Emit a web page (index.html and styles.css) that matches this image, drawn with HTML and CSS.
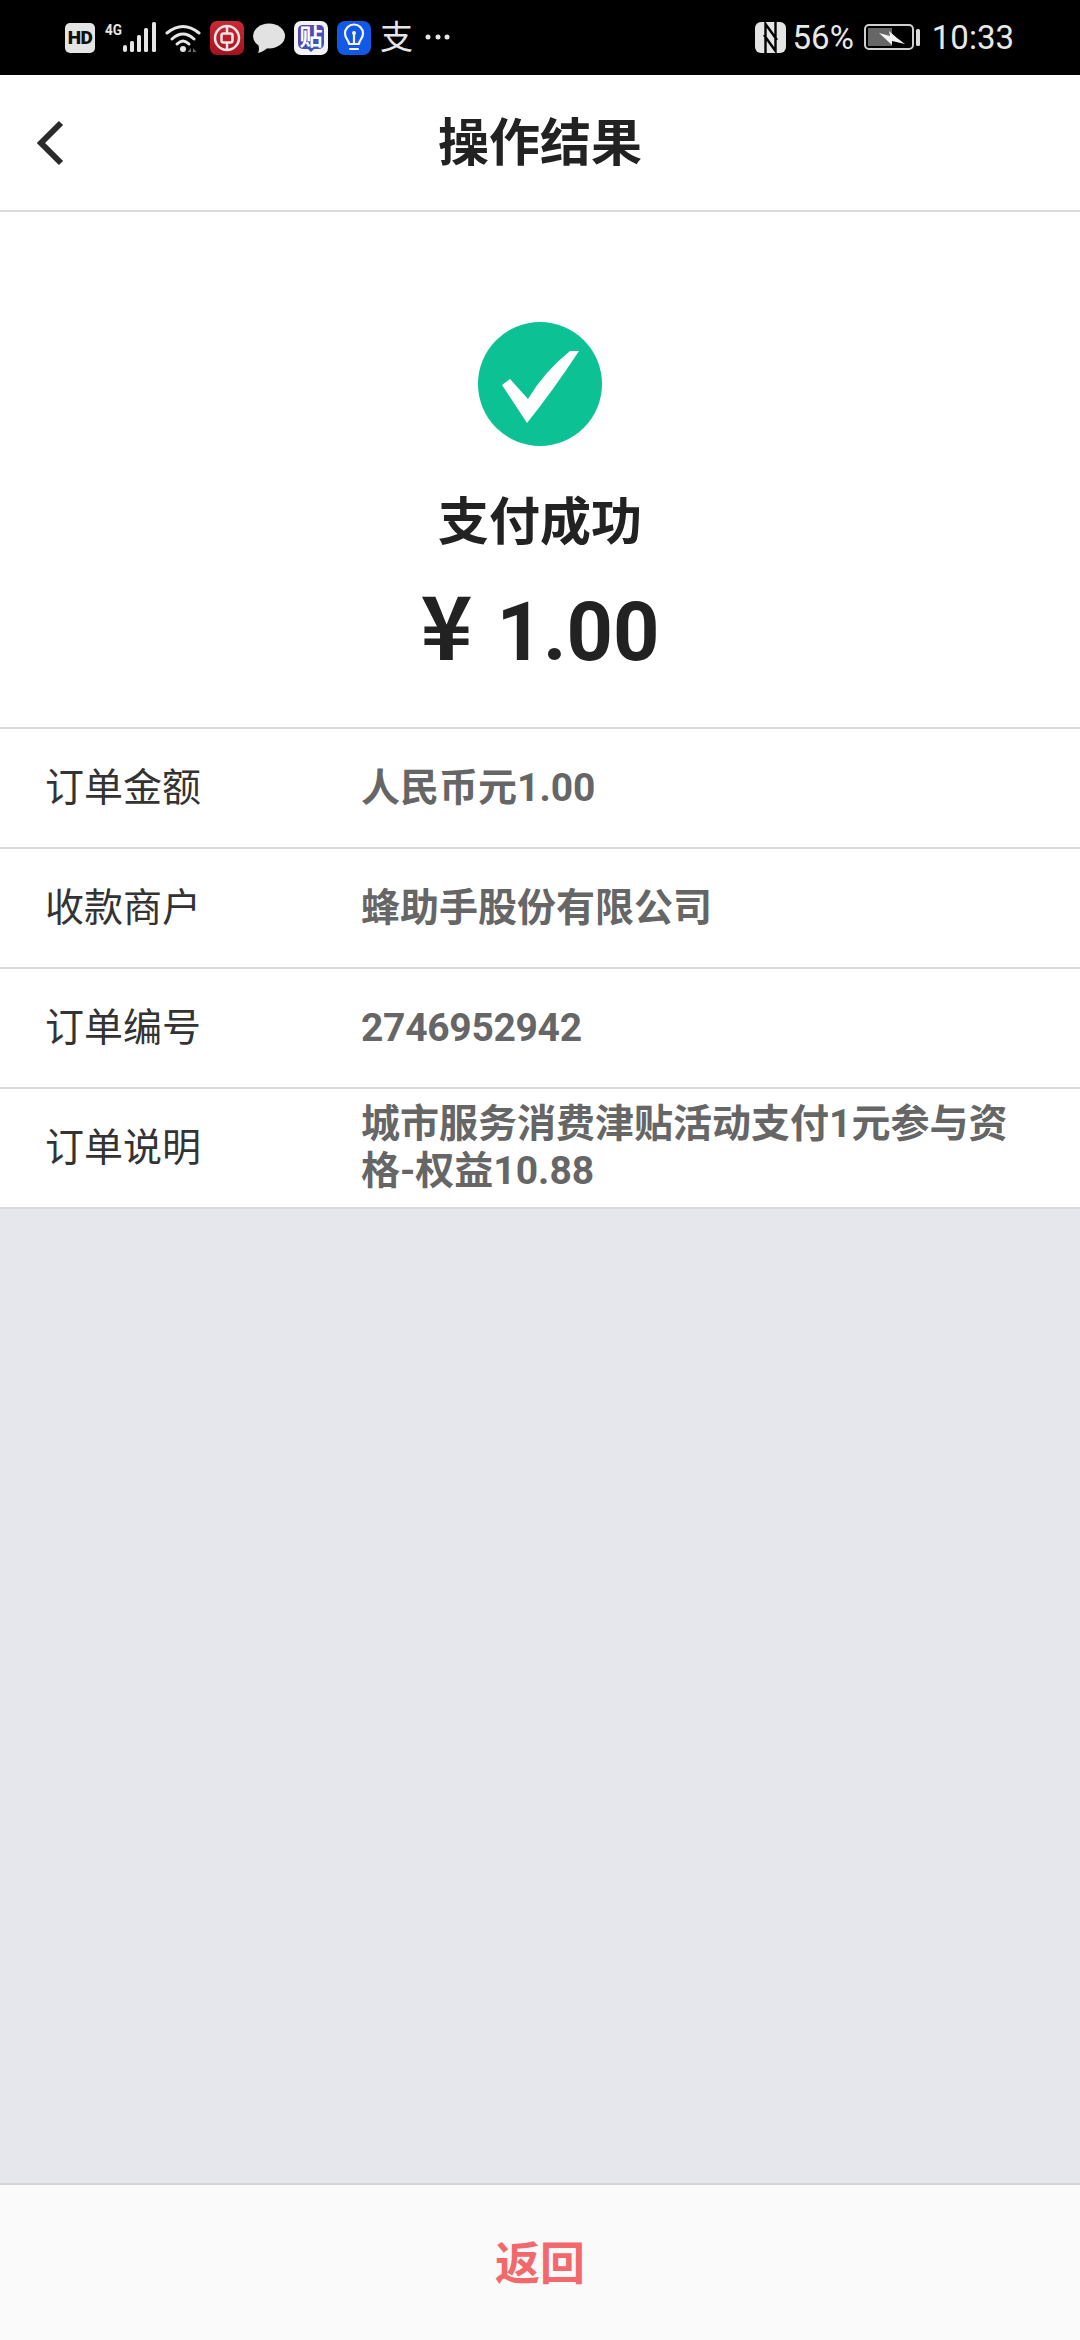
FILE: index.html
```html
<!DOCTYPE html>
<html lang="zh-CN">
<head>
  <meta charset="UTF-8">
  <meta name="viewport" content="width=device-width, initial-scale=1.0">
  <title>操作结果</title>
  <link rel="stylesheet" href="styles.css">
</head>
<body>
  <div class="page">
    <div class="status-bar">
      <span class="hd">HD</span>
      <svg class="icon" width="52" height="40" viewBox="0 0 52 40">
        <text class="net" x="1" y="17" textLength="17" lengthAdjust="spacingAndGlyphs">4G</text>
        <rect x="19" y="27" width="4" height="7" rx="2" fill="#e6e6e6"/>
        <rect x="26" y="23" width="4" height="11" rx="1.5" fill="#e6e6e6"/>
        <rect x="33" y="17" width="4" height="17" rx="1.5" fill="#e6e6e6"/>
        <rect x="40" y="10" width="4" height="24" rx="1.5" fill="#e6e6e6"/>
        <rect x="48" y="4" width="4" height="30" rx="1.5" fill="#e6e6e6"/>
      </svg>
      <svg class="icon" width="36" height="40" viewBox="0 0 36 40">
        <g fill="none" stroke="#e6e6e6" stroke-width="3" stroke-linecap="round">
          <path d="M2 15 Q18 2 34 15"/>
          <path d="M7 21 Q18 11 29 21"/>
          <path d="M12 26 Q18 20 24 26"/>
        </g>
        <circle cx="18" cy="31" r="3" fill="#e6e6e6"/>
        <path d="M26 30 L22.500 34 L26 34 Z M28 30 L31.500 34 L28 34 Z" fill="#6a6a6a"/>
      </svg>
      <svg class="icon" width="34" height="40" viewBox="0 0 34 40">
        <defs>
          <linearGradient id="bankRed" x1="0" y1="0" x2="0" y2="1">
            <stop offset="0" stop-color="#c92a38"/>
            <stop offset="1" stop-color="#a5121f"/>
          </linearGradient>
        </defs>
        <rect x="0" y="3" width="34" height="34" rx="7" fill="url(#bankRed)"/>
        <circle cx="17" cy="20" r="12" fill="none" stroke="#f4e4e4" stroke-width="2.500"/>
        <rect x="11.500" y="15.500" width="11" height="9" rx="2" fill="none" stroke="#f4e4e4" stroke-width="2.500"/>
        <path d="M17 8 V15 M17 25 V32" stroke="#f4e4e4" stroke-width="2.500"/>
      </svg>
      <svg class="icon" width="32" height="40" viewBox="0 0 32 40">
        <ellipse cx="16" cy="18" rx="16" ry="12.500" fill="#e2e2e2"/>
        <path d="M5 25 Q7 32 5 35 Q12 33 15 29 Z" fill="#e2e2e2"/>
      </svg>
      <svg class="icon" width="34" height="40" viewBox="0 0 34 40">
        <defs>
          <linearGradient id="tiePurple" x1="0" y1="0" x2="1" y2="1">
            <stop offset="0" stop-color="#6a3fb0"/>
            <stop offset="1" stop-color="#2b58c8"/>
          </linearGradient>
        </defs>
        <rect x="0" y="3" width="34" height="34" rx="7" fill="#f4f4f4"/>
        <path d="M9 7 H25 Q30 7 30 12 V25 Q30 31 24 31 H20 L17 34 L14 31 H10 Q4 31 4 25 V12 Q4 7 9 7 Z" fill="url(#tiePurple)"/>
        <text class="tie" x="17" y="27" text-anchor="middle">贴</text>
      </svg>
      <svg class="icon" width="34" height="40" viewBox="0 0 34 40">
        <rect x="0" y="3" width="34" height="34" rx="8" fill="#1259e6"/>
        <g fill="none" stroke="#f2f6ff" stroke-width="2.200" stroke-linecap="round" stroke-linejoin="round">
          <path d="M12 26 C12 22 8 21 8 15.500 A9 9 0 0 1 26 15.500 C26 21 22 22 22 26 Z"/>
          <path d="M13 31 H21"/>
          <path d="M17 26 V17"/>
        </g>
        <circle cx="17" cy="15" r="2" fill="#f2f6ff"/>
      </svg>
      <span class="zhi">支</span>
      <svg class="icon" width="32" height="40" viewBox="0 0 32 40">
        <circle cx="7" cy="19" r="2.500" fill="#e6e6e6"/>
        <circle cx="17" cy="19" r="2.500" fill="#e6e6e6"/>
        <circle cx="26" cy="19" r="2.500" fill="#e6e6e6"/>
      </svg>

      <div class="status-right">
        <svg class="icon" width="32" height="40" viewBox="0 0 32 40">
          <rect x="0" y="4" width="31" height="31" rx="6" fill="#e4e4e4"/>
          <path d="M10.500 35 V6 L22 22 M20.500 4 V33 L9 17" fill="none" stroke="#000" stroke-width="2.400"/>
        </svg>
        <span class="status-text pct">56%</span>
        <svg class="icon battery" width="56" height="40" viewBox="0 0 56 40">
          <rect x="1" y="7" width="48" height="24" rx="4" fill="none" stroke="#cfcfcf" stroke-width="2"/>
          <rect x="4" y="10" width="24" height="18" fill="#666"/>
          <path d="M15 15 L26 18 L25 13 L33 20 L41 26 L28 23 L28 27 Z" fill="#f2f2f2"/>
          <rect x="52" y="11" width="4" height="17" rx="1.500" fill="#dcdcdc"/>
        </svg>
        <span class="status-text time">10:33</span>
      </div>
    </div>

    <div class="nav-bar">
      <svg class="back" width="30" height="48" viewBox="0 0 30 48">
        <path d="M25 4 L5 24 L25 44" fill="none" stroke="#2a2a2a" stroke-width="6"/>
      </svg>
      <h1 class="nav-title">操作结果</h1>
    </div>

    <div class="result">
      <svg class="ok-mark" width="124" height="124" viewBox="0 0 124 124">
        <circle cx="62" cy="62" r="62" fill="#0cc295"/>
        <path d="M24 63 L32 57 L50 77 Q66 50 92 29 L101 29 Q74 70 49 101 Z" fill="#fff"/>
      </svg>
      <div class="result-title">支付成功</div>
      <div class="result-amount"><span class="yen">¥</span>1.00</div>
    </div>

    <div class="details">
      <div class="row">
        <div class="row-label">订单金额</div>
        <div class="row-value">人民币元1.00</div>
      </div>
      <div class="row">
        <div class="row-label">收款商户</div>
        <div class="row-value">蜂助手股份有限公司</div>
      </div>
      <div class="row">
        <div class="row-label">订单编号</div>
        <div class="row-value row-number">2746952942</div>
      </div>
      <div class="row">
        <div class="row-label">订单说明</div>
        <div class="row-value">城市服务消费津贴活动支付1元参与资格-权益10.88</div>
      </div>
    </div>

    <div class="filler"></div>

    <div class="footer">返回</div>
  </div>
</body>
</html>
```
FILE: styles.css
```css
* {
  box-sizing: border-box;
}

body {
  margin: 0;
  font-family: Roboto, "Noto Sans CJK SC", sans-serif;
  background: #e6e7ec;
}

.page {
  display: flex;
  flex-direction: column;
  height: 2340px;
}

/* status bar */
.status-bar {
  display: flex;
  align-items: center;
  gap: 9px;
  height: 75px;
  padding: 1px 66px 0 65px;
  background: #000;
  color: #e6e6e6;
}

.icon {
  flex: none;
  display: block;
}

.hd {
  flex: none;
  width: 30px;
  height: 30px;
  border-radius: 5px;
  background: #e4e4e4;
  color: #111;
  font-size: 19px;
  font-weight: 900;
  line-height: 30px;
  text-align: center;
  letter-spacing: -0.5px;
}

.net {
  font-size: 14px;
  font-weight: 700;
  fill: #e6e6e6;
}

.tie {
  font-size: 23px;
  font-weight: 700;
  fill: #fff;
}

.zhi {
  flex: none;
  width: 32px;
  font-size: 33px;
  line-height: 40px;
  font-weight: 400;
  text-align: center;
}

.status-right {
  display: flex;
  align-items: center;
  margin-left: auto;
}

.status-text {
  font-size: 33px;
  line-height: 40px;
  color: #e8e8e8;
}

.pct {
  margin-left: 6px;
}

.battery {
  margin-left: 10px;
}

.time {
  margin-left: 12px;
}

/* nav */
.nav-bar {
  position: relative;
  display: flex;
  align-items: center;
  justify-content: center;
  height: 137px;
  padding-top: 3px;
  background: #fff;
  border-bottom: 2px solid #dcdcdc;
}

.back {
  position: absolute;
  left: 36px;
  top: 44px;
}

.nav-title {
  margin: 0;
  font-size: 51px;
  font-weight: 700;
  line-height: 60px;
  color: #222;
}

/* result block */
.result {
  display: flex;
  flex-direction: column;
  align-items: center;
  height: 515px;
  padding-top: 110px;
  background: #fff;
}

.ok-mark {
  display: block;
}

.result-title {
  margin-top: 47px;
  font-size: 51px;
  font-weight: 700;
  line-height: 60px;
  color: #222;
}

.result-amount {
  margin-top: 35px;
  font-size: 81px;
  font-weight: 700;
  line-height: 90px;
  color: #222;
}

.yen {
  margin-right: 24px;
  font-family: "Noto Sans CJK SC", sans-serif;
  font-size: 88px;
  line-height: 0;
}

/* detail rows */
.details {
  background: #fff;
  border-top: 2px solid #d9d9d9;
}

.row {
  display: flex;
  align-items: center;
  height: 120px;
  padding: 0 46px 0 45px;
  border-bottom: 2px solid #d9d9d9;
}

.row-label {
  flex: none;
  width: 316px;
  font-size: 39px;
  line-height: 47px;
  color: #333;
}

.row-value {
  flex: 1;
  font-size: 39px;
  font-weight: 700;
  line-height: 47px;
  color: #666;
}

.row-number {
  letter-spacing: -0.3px;
}

.filler {
  flex: 1;
}

/* bottom button */
.footer {
  height: 157px;
  background: #fafafa;
  border-top: 2px solid #d4d4d8;
  color: #f2686b;
  font-size: 45px;
  font-weight: 700;
  line-height: 159px;
  text-align: center;
}
```
